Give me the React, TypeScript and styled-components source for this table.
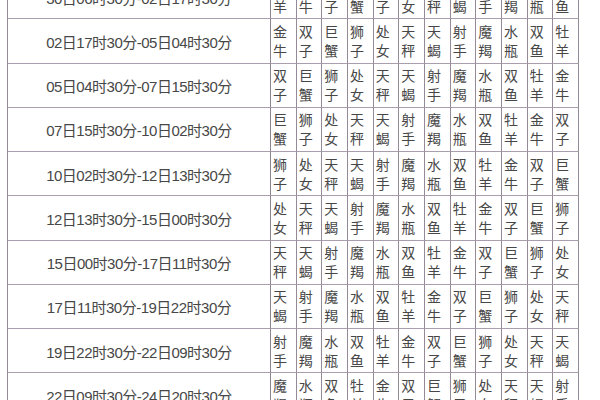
import React from "react";
import styled, { createGlobalStyle } from "styled-components";

const Global = createGlobalStyle`
  html, body { margin: 0; padding: 0; background: #ffffff; }
  body { font-family: "Liberation Sans", "Noto Sans CJK SC", sans-serif; }
`;

const Page = styled.div`
  width: 600px;
  height: 400px;
  overflow: hidden;
  padding-left: 7px;
  box-sizing: border-box;
  background: #ffffff;
`;

const Table = styled.div`
  width: 572px;
  margin-top: -26px;
  border-left: 1px solid #958a98;
  border-top: 1px solid #a99ead;
  box-sizing: border-box;
  display: flex;
  flex-direction: column;
`;

const Row = styled.div`
  display: grid;
  grid-template-columns: 263px repeat(12, 1fr);
  height: 44.25px;
  box-sizing: border-box;
`;

const TimeCell = styled.div`
  display: flex;
  align-items: center;
  justify-content: center;
  border-right: 1px solid #8e8392;
  border-bottom: 1px solid #a99ead;
  font-family: "Liberation Sans", "Noto Sans CJK SC", sans-serif;
  font-size: 15px;
  color: #474747;
  letter-spacing: -0.5px;
  padding-top: 1px;
  box-sizing: border-box;
`;

const SignCell = styled.div`
  display: flex;
  flex-direction: column;
  justify-content: center;
  padding-left: 2px;
  border-right: 1px solid #958a98;
  border-bottom: 1px solid #a99ead;
  font-family: "Noto Sans CJK SC", sans-serif;
  font-size: 14px;
  line-height: 19px;
  color: #474747;
  box-sizing: border-box;
  overflow: hidden;
`;

const signs = [
  "牡羊", "金牛", "双子", "巨蟹", "狮子", "处女",
  "天秤", "天蝎", "射手", "魔羯", "水瓶", "双鱼",
];

const times = [
  "30日06时30分-02日17时30分",
  "02日17时30分-05日04时30分",
  "05日04时30分-07日15时30分",
  "07日15时30分-10日02时30分",
  "10日02时30分-12日13时30分",
  "12日13时30分-15日00时30分",
  "15日00时30分-17日11时30分",
  "17日11时30分-19日22时30分",
  "19日22时30分-22日09时30分",
  "22日09时30分-24日20时30分",
];

export default function App() {
  return (
    <>
      <Global />
      <Page>
        <Table>
          {times.map((t, r) => (
            <Row key={t}>
              <TimeCell>{t}</TimeCell>
              {signs.map((_, c) => {
                const s = signs[(r + c) % 12];
                return (
                  <SignCell key={c}>
                    <span>{s[0]}</span>
                    <span>{s[1]}</span>
                  </SignCell>
                );
              })}
            </Row>
          ))}
        </Table>
      </Page>
    </>
  );
}
